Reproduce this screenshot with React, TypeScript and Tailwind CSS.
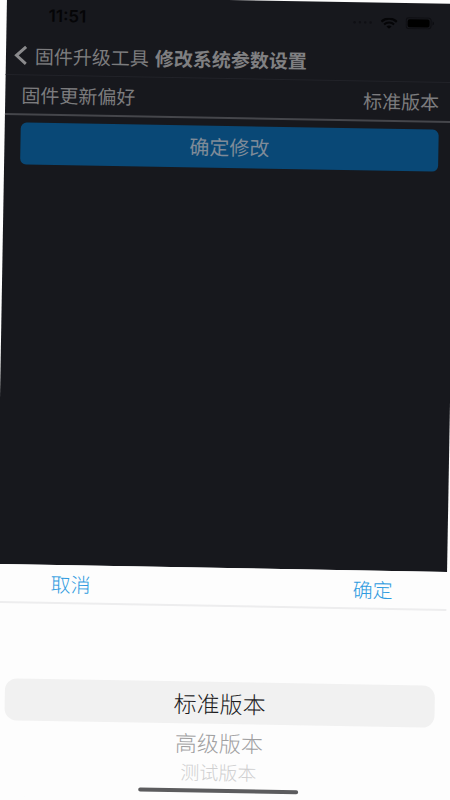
import { useState } from 'react'

const options = ['标准版本', '高级版本', '测试版本']

const optionStyles = [
  'h-[42px] rounded-xl bg-[#f1f1f1] text-[23px] text-[#1c1c1e]',
  'h-9 text-[22px] text-[#a0a0a1]',
  'h-6 text-[19px] text-[#cfcfd0]',
]

const StatusBar = () => (
  <div className="flex h-10 items-center justify-between pr-[22px] pl-[42px] text-[#050507]">
    <span className="font-['Inter'] text-[17px] font-semibold">11:51</span>
    <div className="flex items-center gap-2">
      <svg width="20" height="4" viewBox="0 0 20 4" fill="#0f0f14">
        <circle cx="2" cy="2" r="1.2" />
        <circle cx="7.3" cy="2" r="1.2" />
        <circle cx="12.6" cy="2" r="1.2" />
        <circle cx="18" cy="2" r="1.2" />
      </svg>
      <svg width="17" height="11" viewBox="0 0 17 11" fill="none" stroke="currentColor">
        <path d="M.8 3.900c4.300-4 11.100-4 15.400 0" strokeWidth="2.200" />
        <path d="M3.500 6.700c2.800-2.600 7.200-2.600 10 0" strokeWidth="2" />
        <path d="M8.500 11 5.900 8.700c1.500-1.300 3.700-1.300 5.200 0z" fill="currentColor" stroke="none" />
      </svg>
      <svg width="29" height="12" viewBox="0 0 29 12">
        <rect x=".5" y=".5" width="25" height="11" rx="3" fill="none" stroke="#0e0e12" />
        <rect x="2" y="2" width="22" height="8" rx="2" fill="#000" />
        <path d="M27 4c1.800.6 1.800 3.400 0 4z" fill="#0b0b0f" />
      </svg>
    </div>
  </div>
)

const Header = () => (
  <header className="flex h-[39px] items-center gap-1.5 border-b border-[#222329] pl-2 text-[19px]">
    <button className="flex items-center gap-2 text-[#7c7c7e]" aria-label="固件升级工具">
      <svg width="13" height="20" viewBox="0 0 13 20" fill="none" stroke="#8a8a8c" strokeWidth="3">
        <path d="M12 1.500 2.500 10l9.500 8.500" />
      </svg>
      <span>固件升级工具</span>
    </button>
    <h1 className="font-bold text-[#808082]">修改系统参数设置</h1>
  </header>
)

const Picker = () => {
  const [selected, setSelected] = useState(0)

  return (
    <section className="flex h-[232px] flex-col bg-[#fdfdfd]">
      <div className="flex h-[39px] shrink-0 items-center justify-between border-b-2 border-[#ededee] px-[54px] text-[20px] font-light text-[#2f9be0]">
        <button>取消</button>
        <button>确定</button>
      </div>
      <div
        role="listbox"
        aria-label="固件更新偏好"
        className="flex flex-1 flex-col px-[10px] pt-[75px] font-light"
      >
        {options.map((option, i) => (
          <button
            key={option}
            role="option"
            aria-selected={selected === i}
            onClick={() => setSelected(i)}
            className={`w-full shrink-0 leading-5 ${optionStyles[Math.abs(i - selected)]}`}
          >
            {option}
          </button>
        ))}
      </div>
      <div className="mx-auto mb-[7px] h-1 w-40 shrink-0 rounded-full bg-[#5c5c5e]" />
    </section>
  )
}

export default function App() {
  return (
    <div className="h-screen overflow-hidden bg-[#fdfdfd] font-['Noto_Sans_CJK_SC',sans-serif]">
      <main className="flex h-full rotate-1 flex-col">
        <div className="flex-1 bg-[#17181d]">
          <StatusBar />
          <Header />
          <div className="flex h-10 items-center justify-between border-b-2 border-[#45464b] px-4 text-[19px] text-[#7c7c7e]">
            <span>固件更新偏好</span>
            <span>标准版本</span>
          </div>
          <div className="px-4 pt-[7px]">
            <button className="h-[42px] w-full rounded-md bg-[#094876] text-[20px] text-[#7f8b98]">
              确定修改
            </button>
          </div>
        </div>
        <Picker />
      </main>
    </div>
  )
}
